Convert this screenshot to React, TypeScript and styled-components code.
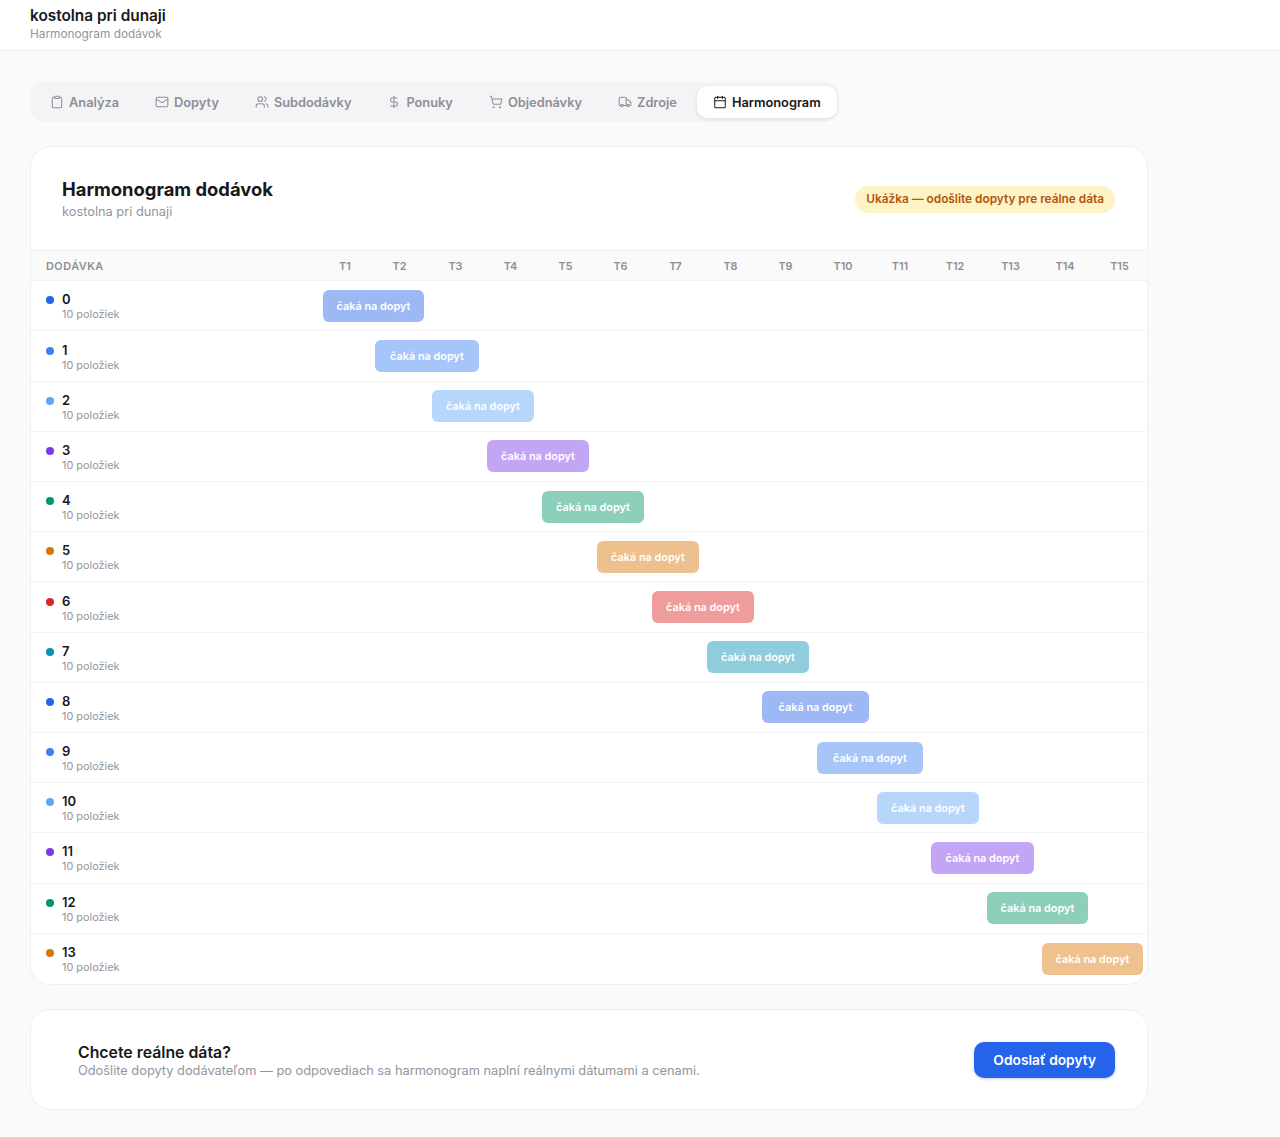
import styled, { createGlobalStyle } from "styled-components";
import { Calendar, Clipboard, DollarSign, Mail, ShoppingCart, Truck, Users } from "lucide-react";

const tabs = [
  { label: "Analýza", icon: Clipboard },
  { label: "Dopyty", icon: Mail },
  { label: "Subdodávky", icon: Users },
  { label: "Ponuky", icon: DollarSign },
  { label: "Objednávky", icon: ShoppingCart },
  { label: "Zdroje", icon: Truck },
  { label: "Harmonogram", icon: Calendar },
];

const colors = ["#2563eb", "#3b82f6", "#60a5fa", "#7c3aed", "#059669", "#d97706", "#dc2626", "#0891b2"];
const columns = Array.from({ length: 15 }, (_, i) => `T${i + 1}`);
const deliveries = Array.from({ length: 14 }, (_, i) => ({
  id: i,
  color: colors[i % colors.length],
}));

export default function App() {
  return (
    <>
      <GlobalStyle />
      <Header>
        <ProjectName>kostolna pri dunaji</ProjectName>
        <ProjectSub>Harmonogram dodávok</ProjectSub>
      </Header>
      <Main>
        <Tabs>
          {tabs.map(({ label, icon: Icon }) => (
            <Tab key={label} $active={label === "Harmonogram"}>
              <Icon size={14} strokeWidth={1.75} />
              {label}
            </Tab>
          ))}
        </Tabs>

        <Card>
          <CardHead>
            <div>
              <CardTitle>Harmonogram dodávok</CardTitle>
              <CardSub>kostolna pri dunaji</CardSub>
            </div>
            <Badge>Ukážka — odošlite dopyty pre reálne dáta</Badge>
          </CardHead>
          <HeadRow>
            <HeadName>Dodávka</HeadName>
            {columns.map((c) => (
              <HeadCell key={c}>{c}</HeadCell>
            ))}
          </HeadRow>
          {deliveries.map((d) => (
            <Row key={d.id}>
              <NameCell>
                <Dot $color={d.color} />
                <div>
                  <RowName>{d.id}</RowName>
                  <RowCount>10 položiek</RowCount>
                </div>
              </NameCell>
              <Bar $color={d.color} $start={d.id + 2}>
                čaká na dopyt
              </Bar>
            </Row>
          ))}
        </Card>

        <Cta>
          <CtaCopy>
            <CtaTitle>Chcete reálne dáta?</CtaTitle>
            <CtaText>Odošlite dopyty dodávateľom — po odpovediach sa harmonogram naplní reálnymi dátumami a cenami.</CtaText>
          </CtaCopy>
          <SendButton>Odoslať dopyty</SendButton>
        </Cta>
      </Main>
    </>
  );
}

const GlobalStyle = createGlobalStyle`
  * {
    box-sizing: border-box;
  }

  body {
    margin: 0;
    background: #fafafc;
    color: #18181b;
    font-family: Inter, "Liberation Sans", sans-serif;
  }
`;

const Header = styled.header`
  height: 51px;
  padding: 7px 30px 0;
  background: #ffffff;
  border-bottom: 1px solid #f0f0f3;
`;

const ProjectName = styled.div`
  font-size: 15.36px;
  line-height: 18px;
  font-weight: 600;
`;

const ProjectSub = styled.div`
  margin-top: 1px;
  font-size: 11.84px;
  line-height: 16px;
  color: #94949c;
`;

const Main = styled.main`
  width: 1178px;
  padding: 31px 30px 27px;
`;

const Tabs = styled.nav`
  display: inline-flex;
  gap: 4px;
  padding: 4px 1px 4px 4px;
  height: 40px;
  border-radius: 14px;
  background: #f4f4f6;
  vertical-align: top;
`;

const Tab = styled.div<{ $active?: boolean }>`
  display: flex;
  align-items: center;
  gap: 5px;
  height: 32px;
  padding: 0 16px;
  border-radius: 10px;
  font-size: 12.8px;
  font-weight: 600;
  color: ${(p) => (p.$active ? "#18181b" : "#8e8e96")};
  background: ${(p) => (p.$active ? "#ffffff" : "transparent")};
  box-shadow: ${(p) => (p.$active ? "0 1px 4px rgba(0, 0, 0, 0.1)" : "none")};
`;

const Card = styled.section`
  margin-top: 24px;
  background: #ffffff;
  border: 1px solid #f0f0f3;
  border-radius: 20px;
  overflow: hidden;
`;

const CardHead = styled.div`
  display: flex;
  align-items: center;
  justify-content: space-between;
  height: 103px;
  padding: 0 32px 0 31px;
`;

const CardTitle = styled.h2`
  margin: 0;
  font-size: 18.4px;
  line-height: 24px;
  font-weight: 700;
`;

const CardSub = styled.div`
  margin-top: 3px;
  font-size: 12.8px;
  line-height: 16px;
  color: #94949c;
`;

const Badge = styled.span`
  margin-top: 2px;
  padding: 6px 11px;
  border-radius: 999px;
  background: #fef3c7;
  color: #b45309;
  font-size: 11.84px;
  line-height: 15px;
  font-weight: 600;
`;

// widths measured per column: the original is an auto-layout table
const gridColumns = "288px 52px 57px 55px 55px 55px 55px 55px 55px 55px 60px 54px 56px 55px 54px 55px";

const HeadRow = styled.div`
  display: grid;
  grid-template-columns: ${gridColumns};
  align-items: center;
  height: 31.3px;
  background: #fafafb;
  border-top: 1px solid #f0f0f3;
  border-bottom: 1px solid #f0f0f3;
`;

const HeadName = styled.div`
  padding-left: 15px;
  font-size: 10.88px;
  font-weight: 600;
  letter-spacing: 0.5px;
  text-transform: uppercase;
  color: #8e8e96;
`;

const HeadCell = styled.div`
  text-align: center;
  font-size: 10.88px;
  font-weight: 600;
  color: #8e8e96;
`;

const Row = styled.div`
  display: grid;
  grid-template-columns: ${gridColumns};
  align-items: center;
  height: 50.2px;
  border-bottom: 1px solid #f4f4f6;

  &:last-child {
    border-bottom: none;
  }
`;

const NameCell = styled.div`
  grid-column: 1;
  grid-row: 1;
  display: flex;
  align-items: flex-start;
  gap: 8px;
  padding-left: 15px;
`;

const Dot = styled.span<{ $color: string }>`
  flex: none;
  width: 8px;
  height: 8px;
  margin-top: 5px;
  border-radius: 50%;
  background: ${(p) => p.$color};
`;

const RowName = styled.div`
  font-size: 13px;
  line-height: 16px;
  font-weight: 600;
`;

const RowCount = styled.div`
  margin-top: 1px;
  margin-bottom: -1px;
  font-size: 10.88px;
  line-height: 13px;
  color: #94949c;
`;

const Bar = styled.div<{ $color: string; $start: number }>`
  grid-column: ${(p) => p.$start} / span 2;
  grid-row: 1;
  display: flex;
  align-items: center;
  justify-content: center;
  height: 32px;
  margin: 0 4px;
  border-radius: 6px;
  background: ${(p) => p.$color};
  opacity: 0.45;
  color: #ffffff;
  font-size: 10.88px;
  font-weight: 600;
  white-space: nowrap;
`;

const Cta = styled.section`
  display: flex;
  align-items: center;
  justify-content: space-between;
  height: 101px;
  margin-top: 24px;
  padding: 2px 32px 0 47px;
  background: #ffffff;
  border: 1px solid #f0f0f3;
  border-radius: 20px;
`;

const CtaCopy = styled.div`
  padding-top: 1px;
`;

const CtaTitle = styled.div`
  font-size: 15.84px;
  line-height: 19px;
  font-weight: 600;
`;

const CtaText = styled.div`
  margin-top: 1px;
  font-size: 12.8px;
  line-height: 16px;
  color: #94949c;
`;

const SendButton = styled.button`
  height: 36px;
  margin-top: -1px;
  padding: 0 19px;
  border: none;
  border-radius: 10px;
  background: #2563eb;
  color: #ffffff;
  font-family: inherit;
  font-size: 13.76px;
  font-weight: 600;
  box-shadow: 0 1px 3px rgba(37, 99, 235, 0.3);
`;
